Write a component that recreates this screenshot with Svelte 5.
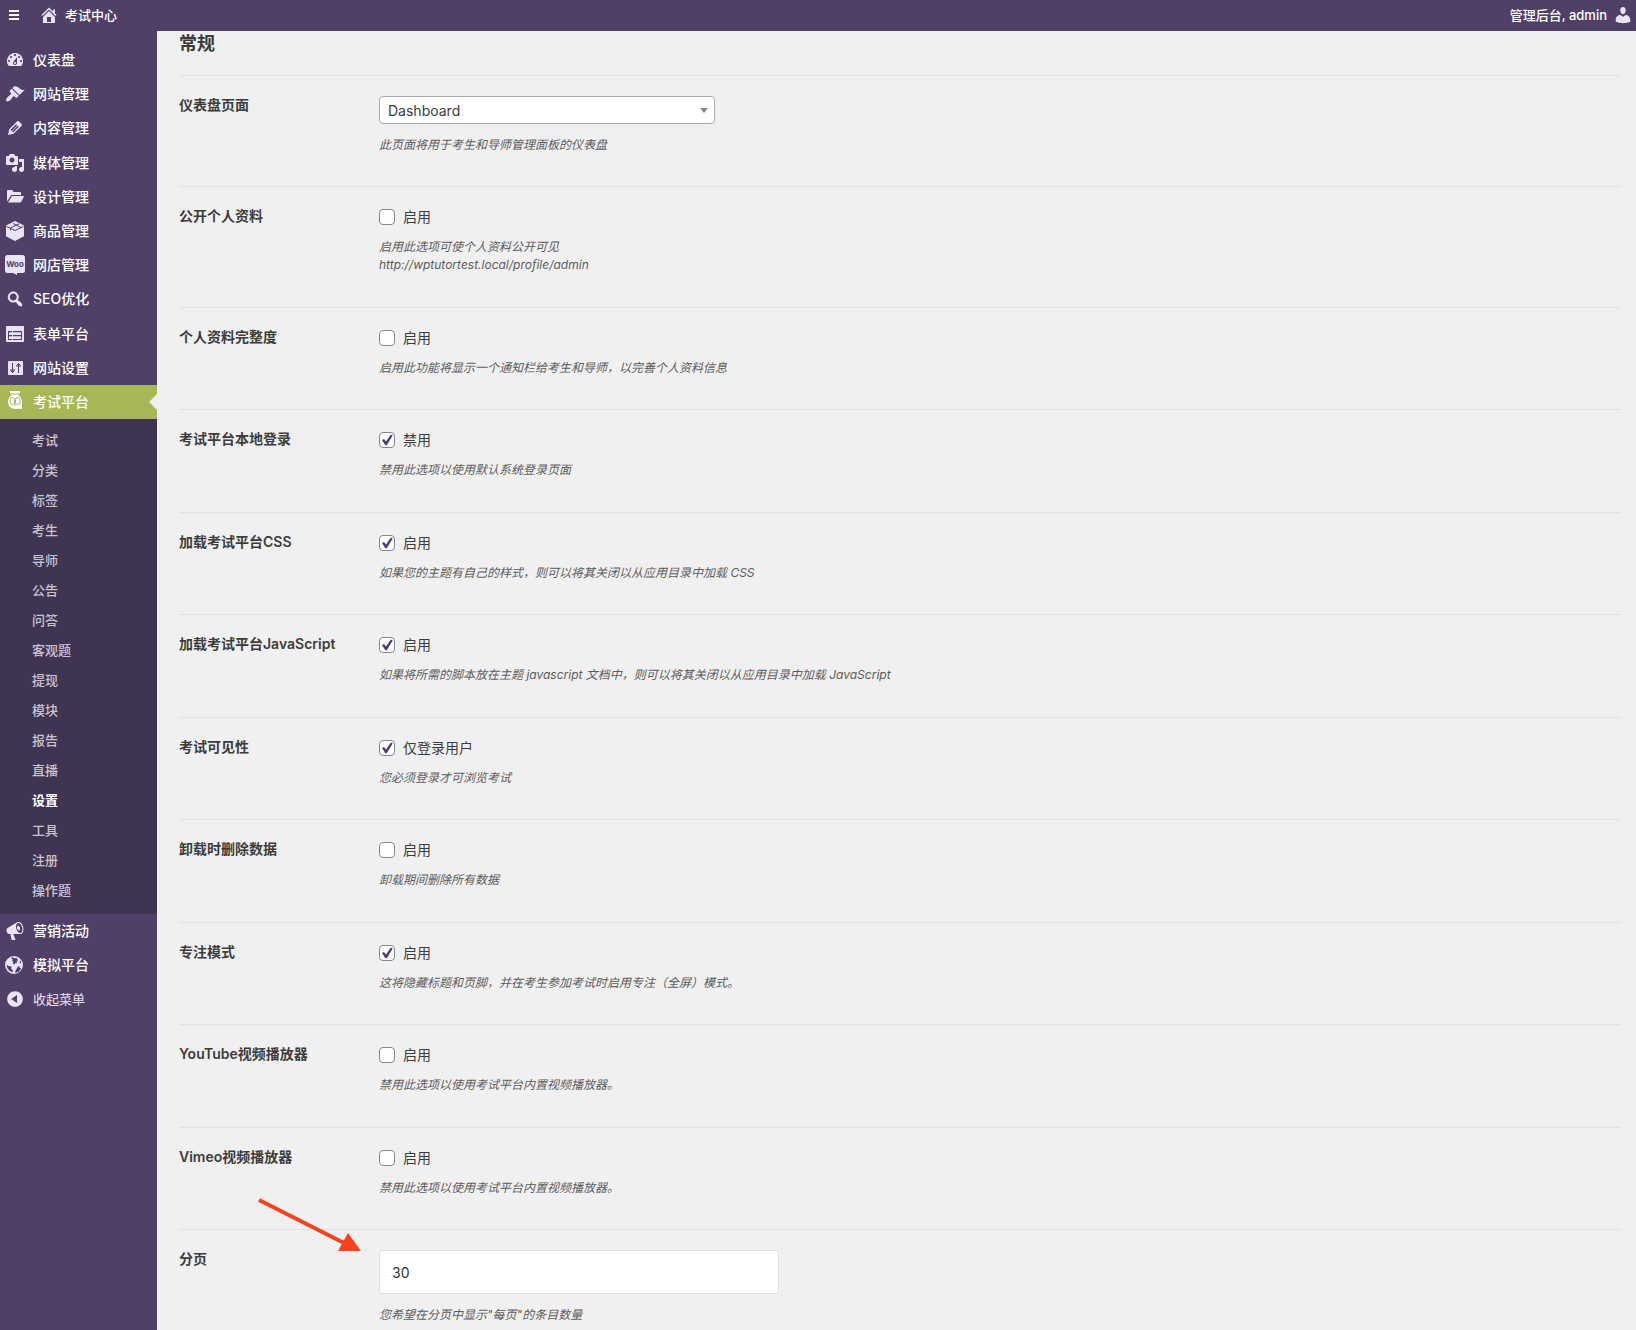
<script>
	let activeMenu = 'exam';
	let page = 'dashboard';
	let perPage = '30';

	const menu = [
		{ id: 'dashboard', label: '仪表盘' },
		{ id: 'site', label: '网站管理' },
		{ id: 'content', label: '内容管理' },
		{ id: 'media', label: '媒体管理', group: true },
		{ id: 'design', label: '设计管理' },
		{ id: 'product', label: '商品管理' },
		{ id: 'woo', label: '网店管理' },
		{ id: 'seo', label: 'SEO优化' },
		{ id: 'form', label: '表单平台', group: true },
		{ id: 'settings', label: '网站设置' },
		{
			id: 'exam',
			label: '考试平台',
			children: [
				'考试', '分类', '标签', '考生', '导师', '公告', '问答', '客观题',
				'提现', '模块', '报告', '直播', '设置', '工具', '注册', '操作题'
			]
		},
		{ id: 'marketing', label: '营销活动' },
		{ id: 'mock', label: '模拟平台' }
	];

	let options = [
		{
			id: 'public_profile',
			title: '公开个人资料',
			text: '启用',
			checked: false,
			desc: ['启用此选项可使个人资料公开可见', 'http://wptutortest.local/profile/admin']
		},
		{
			id: 'profile_completion',
			title: '个人资料完整度',
			text: '启用',
			checked: false,
			desc: ['启用此功能将显示一个通知栏给考生和导师，以完善个人资料信息']
		},
		{
			id: 'native_login',
			title: '考试平台本地登录',
			text: '禁用',
			checked: true,
			desc: ['禁用此选项以使用默认系统登录页面']
		},
		{
			id: 'load_css',
			title: '加载考试平台CSS',
			text: '启用',
			checked: true,
			desc: ['如果您的主题有自己的样式，则可以将其关闭以从应用目录中加载 CSS']
		},
		{
			id: 'load_js',
			title: '加载考试平台JavaScript',
			text: '启用',
			checked: true,
			desc: ['如果将所需的脚本放在主题 javascript 文档中，则可以将其关闭以从应用目录中加载 JavaScript']
		},
		{
			id: 'visibility',
			title: '考试可见性',
			text: '仅登录用户',
			checked: true,
			desc: ['您必须登录才可浏览考试']
		},
		{
			id: 'erase_data',
			title: '卸载时删除数据',
			text: '启用',
			checked: false,
			desc: ['卸载期间删除所有数据']
		},
		{
			id: 'focus_mode',
			title: '专注模式',
			text: '启用',
			checked: true,
			desc: ['这将隐藏标题和页脚，并在考生参加考试时启用专注（全屏）模式。']
		},
		{
			id: 'youtube',
			title: 'YouTube视频播放器',
			text: '启用',
			checked: false,
			desc: ['禁用此选项以使用考试平台内置视频播放器。']
		},
		{
			id: 'vimeo',
			title: 'Vimeo视频播放器',
			text: '启用',
			checked: false,
			desc: ['禁用此选项以使用考试平台内置视频播放器。']
		}
	];

	const icons = {
		home: 'M16 8.5l1.53 1.53-1.06 1.06L10 4.6l-6.47 6.49-1.06-1.06L10 2.5l4 4v-2h2v4zm-6-2.46l6 5.99V18H4v-5.97zM12 17v-5H8v5h4z',
		user: 'M10 9.25c-2.27 0-2.73-3.44-2.73-3.44C7 4.02 7.82 2 9.97 2c2.16 0 2.98 2.02 2.71 3.81 0 0-.41 3.44-2.68 3.44zm0 2.57L12.72 10c2.39 0 4.52 2.33 4.52 4.53v2.49s-3.65 1.13-7.24 1.13c-3.65 0-7.24-1.13-7.24-1.13v-2.49c0-2.25 1.94-4.48 4.47-4.48z',
		dashboard:
			'M3.76 16h12.48A7.998 7.998 0 0 0 10 3a7.998 7.998 0 0 0-6.24 13zM10 4c.55 0 1 .45 1 1s-.45 1-1 1-1-.45-1-1 .45-1 1-1zM6 6c.55 0 1 .45 1 1s-.45 1-1 1-1-.45-1-1 .45-1 1-1zm8 0c.55 0 1 .45 1 1s-.45 1-1 1-1-.45-1-1 .45-1 1-1zm-5.37 5.55L12 7v6c0 1.1-.9 2-2 2s-2-.9-2-2c0-.57.24-1.08.63-1.45zM4 10c.55 0 1 .45 1 1s-.45 1-1 1-1-.45-1-1 .45-1 1-1zm12 0c.55 0 1 .45 1 1s-.45 1-1 1-1-.45-1-1 .45-1 1-1zm-5 3c0-.55-.45-1-1-1s-1 .45-1 1 .45 1 1 1 1-.45 1-1z',
		site: 'M14.48 11.06L7.41 3.99l1.5-1.5c.5-.56 2.3-.47 3.51.32 1.21.8 1.43 1.28 2.91 2.1 1.18.64 2.45 1.26 4.45.85zm-.71.71L6.7 4.7 4.93 6.47c-.39.39-.39 1.02 0 1.41l1.06 1.06c.39.39.39 1.03 0 1.42-.6.6-1.43 1.11-2.21 1.69-.35.26-.7.53-1.01.84C1.43 14.23.4 16.08 1.4 17.07c.99 1 2.84-.03 4.18-1.36.31-.31.58-.66.85-1.02.57-.78 1.08-1.61 1.69-2.21.39-.39 1.02-.39 1.41 0l1.06 1.06c.39.39 1.02.39 1.41 0z',
		content:
			'M13.89 3.39l2.71 2.72c.46.46.42 1.24.03 1.64l-8.01 8.02-5.56 1.16 1.16-5.58s7.6-7.63 7.99-8.03c.39-.39 1.22-.39 1.68.07zm-2.73 2.79l-5.59 5.61 1.11 1.11 5.54-5.65zm-2.97 8.23l5.58-5.6-1.07-1.08-5.59 5.6z',
		media:
			'M13 11V4c0-.55-.45-1-1-1h-1.67L9 1H5L3.67 3H2c-.55 0-1 .45-1 1v7c0 .55.45 1 1 1h10c.55 0 1-.45 1-1zM7 4.5c1.38 0 2.5 1.12 2.5 2.5S8.38 9.5 7 9.5 4.5 8.38 4.5 7 5.62 4.5 7 4.5zM14 6h5v10.5c0 1.38-1.12 2.5-2.5 2.5S14 17.88 14 16.5s1.12-2.5 2.5-2.5c.17 0 .34.02.5.05V9h-3V6zm-4 8.05V13h2v3.5c0 1.38-1.12 2.5-2.5 2.5S7 17.88 7 16.5 8.12 14 9.5 14c.17 0 .34.02.5.05z',
		design:
			'M2 14.5V4.2C2 3.5 2.5 3 3.2 3H7l1.6 2h6.2c.7 0 1.2.5 1.2 1.2V8H7.2c-.7 0-1.2.3-1.6.9zM3 15.5l3.6-5.8c.2-.4.5-.7 1-.7H18.4c.4 0 .6.4.4.8l-2.6 5c-.3.5-.6.7-1.1.7z',
		seo: 'M12.14 4.18c1.87 1.87 2.11 4.75.72 6.89.12.1.22.21.36.31.2.16.47.36.81.59.34.24.56.39.66.47.42.31.73.57.94.78.32.32.6.65.84 1 .25.35.44.69.59 1.04.14.35.21.68.18 1-.02.32-.14.59-.36.81s-.49.34-.81.36c-.31.02-.65-.04-.99-.19-.35-.14-.7-.34-1.04-.59-.35-.24-.68-.52-1-.84-.21-.21-.47-.52-.77-.93-.1-.13-.25-.35-.47-.66-.22-.32-.4-.57-.56-.78-.16-.2-.29-.35-.44-.5-2.07 1.09-4.69.76-6.44-.98-2.14-2.15-2.14-5.64 0-7.78 2.15-2.15 5.63-2.15 7.78 0zm-1.41 6.36c1.36-1.37 1.36-3.58 0-4.95-1.37-1.37-3.59-1.37-4.95 0-1.37 1.37-1.37 3.58 0 4.95 1.36 1.37 3.58 1.37 4.95 0z',
		form: 'M2 2h16c.6 0 1 .4 1 1v14c0 .6-.4 1-1 1H2c-.6 0-1-.4-1-1V3c0-.6.4-1 1-1zM3 7v9h4.200V7zM8 7v9h9V7zM4 8.200V11h3.200V8.200zM8 8.200V11h8V8.200zM4 12.200V15h3.200V12.200zM8 12.200V15h8V12.200z',
		marketing:
			'M18.15 5.94c.46 1.62.38 3.22-.02 4.48-.42 1.28-1.26 2.18-2.3 2.48-.16.06-.26.06-.4.06-.06.02-.12.02-.18.02-.06.02-.14.02-.22.02h-6.8l2.22 5.5c.02.14-.06.26-.14.34-.08.1-.24.16-.34.16H6.95c-.1 0-.26-.06-.34-.16-.08-.08-.16-.2-.14-.34l-1-5.5H4.25l-.02-.02c-.5.06-1.08-.18-1.54-.62s-.88-1.08-1.06-1.88c-.24-.8-.2-1.56-.02-2.2.18-.62.58-1.08 1.06-1.3l.02-.02 9-5.4c.1-.06.18-.1.24-.16.06-.04.14-.08.24-.12.16-.08.28-.12.5-.18 1.04-.3 2.24.1 3.22.98s1.84 2.24 2.26 3.86zm-2.58 5.98h-.02c.4-.1.74-.34 1.04-.7.58-.7.86-1.76.86-3.04 0-.64-.1-1.3-.28-1.98-.34-1.36-1.02-2.5-1.78-3.24s-1.68-1.1-2.46-.88c-.82.22-1.4.96-1.7 2-.32 1.04-.28 2.36.06 3.72.38 1.36 1 2.5 1.8 3.24.78.74 1.62 1.1 2.48.88zm-2.54-7.08c.22-.04.42-.02.62.04.38.16.76.48 1.02 1s.42 1.2.42 1.78c0 .3-.04.56-.12.8-.18.48-.44.84-.86.94-.34.1-.8-.06-1.14-.4s-.64-.86-.78-1.5c-.18-.62-.12-1.24.02-1.72s.48-.84.82-.94z',
		mock: 'M9 1a9 9 0 1 1 0 18A9 9 0 0 1 9 1zM1.600 9.200c0 3.300 1.600 6 4.500 7.500l1.600.4.2-1.600-1.600-1.500.2-2.300-1.300-.4-2.200-.4zM7.500 2.200L6 3.500l1.800.8-.5 1.500 1.200 1.400-.8 1.800 2 .3.8-1.300L12.200 8l-.6-1.800 1.400-1-1.200-2.300-2 .3zM11.800 13.500l-1.300 2.200-.3 2c1.800-.1 3.300-.8 4.500-2l1.500-2.500-1.300-.2-.7-1.700-1.400.2zM15.300 5.500l-1 1.300 1.200 1.500 1 .2z',
		collapse:
			'M10 2.16c4.33 0 7.84 3.51 7.84 7.84s-3.51 7.84-7.84 7.84S2.16 14.33 2.16 10 5.71 2.16 10 2.16zm2 11.72V6.12L6.18 9.97z'
	};
</script>

<header class="topbar">
	<button class="toggle" type="button" aria-label="菜单">
		<svg viewBox="0 0 10 10"><path d="M0 0h10v2H0zM0 4h10v2H0zM0 8h10v2H0z" /></svg>
	</button>
	<a class="site-name" href="#home">
		<svg class="icon" viewBox="0 0 20 20"><path fill-rule="evenodd" d={icons.home} /></svg>
		考试中心
	</a>
	<a class="account" href="#account">
		管理后台, admin
		<svg class="icon" viewBox="0 0 20 20"><path d={icons.user} /></svg>
	</a>
</header>

<div class="layout">
	<nav class="sidebar">
		<ul class="menu">
			{#each menu as item}
				<li class:group={item.group}>
					<a class="menu-link" class:active={item.id === activeMenu} href="#{item.id}">
						<svg class="icon" viewBox="0 0 20 20">
							{#if item.id === 'product'}
								<path d="M10 0l9 4.500v10.700L10 20l-9-4.800V4.500z" />
								<path class="line" d="M1.500 5.500L10 9.500l8.500-4M5.500 7.300v2M5.500 7L14 2.800M8 2.500l8 4" />
							{:else if item.id === 'woo'}
								<path d="M2.500 0h15A2.500 2.500 0 0 1 20 2.500v13a2.500 2.500 0 0 1-2.500 2.500H12v2l-4-2H2.500A2.500 2.500 0 0 1 0 15.500v-13A2.500 2.500 0 0 1 2.500 0z" />
								<text class="woo" x="10" y="12" text-anchor="middle">Woo</text>
							{:else if item.id === 'settings'}
								<rect x="3" y="3" width="15" height="14" rx="1" />
								<path class="line" d="M7.500 5v9M5 12h5M5.500 12.500l2 2 2-2M13.500 15V6M11 8h5M11.500 7.500l2-2 2 2" />
							{:else if item.id === 'exam'}
								<path d="M4.500-1h11l-1 3-1 .5v1c2.300 1.500 3.500 3.700 3.500 6.500v7l-3-.3c-1.200.5-2.600.5-4 .3-4-.4-7-3-7-7 0-2.800 1.200-5 3.500-6.500v-1L5.500 2z" />
								<g class="cut">
									<path d="M6 1.500q4 1.500 8 0" />
									<rect x="5" y="5.500" width="4.500" height="7" rx="2.200" />
									<rect x="10.500" y="5.500" width="4.500" height="7" rx="2.200" />
									<path d="M10 11v3" />
								</g>
							{:else}
								<path fill-rule="evenodd" d={icons[item.id]} />
							{/if}
						</svg>
						{item.label}
					</a>
					{#if item.children && item.id === activeMenu}
						<ul class="submenu">
							{#each item.children as child}
								<li><a href="#exam" class:current={child === '设置'}>{child}</a></li>
							{/each}
						</ul>
					{/if}
				</li>
			{/each}
			<li>
				<button class="menu-link collapse" type="button">
					<svg class="icon" viewBox="0 0 20 20"><path fill-rule="evenodd" d={icons.collapse} /></svg>
					收起菜单
				</button>
			</li>
		</ul>
	</nav>

	<main>
		<h2>常规</h2>
		<form on:submit|preventDefault>
			<div class="row">
				<label class="title" for="dashboard_page">仪表盘页面</label>
				<div class="field">
					<div class="select-wrap">
						<select id="dashboard_page" bind:value={page}>
							<option value="dashboard">Dashboard</option>
						</select>
					</div>
					<p class="desc">此页面将用于考生和导师管理面板的仪表盘</p>
				</div>
			</div>

			{#each options as option}
				<div class="row" role="group" aria-labelledby="{option.id}_title">
					<span class="title" id="{option.id}_title">{option.title}</span>
					<div class="field">
						<label class="check">
							<input type="checkbox" bind:checked={option.checked} />
							{option.text}
						</label>
						<div class="desc">
							{#each option.desc as line}
								<p>{line}</p>
							{/each}
						</div>
					</div>
				</div>
			{/each}

			<div class="row">
				<label class="title" for="per_page">分页</label>
				<div class="field">
					<input id="per_page" class="text" type="text" bind:value={perPage} />
					<p class="desc">您希望在分页中显示"每页"的条目数量</p>
				</div>
				<svg class="arrow" viewBox="0 0 104 56" aria-hidden="true">
					<path d="M1 4L86 47" stroke="#f5431f" stroke-width="4" />
					<path d="M90 37L103 55H80z" fill="#f5431f" />
				</svg>
			</div>
		</form>
	</main>
</div>

<style>
	:global(body) {
		background: #f0f0f0;
		color: #3c3c3c;
		font-family: Inter, 'Noto Sans CJK SC', sans-serif;
		font-size: 14px;
		line-height: 20px;
	}
	:global(#app) {
		display: flex;
		flex-direction: column;
		min-height: 100vh;
	}
	ul {
		list-style: none;
		margin: 0;
		padding: 0;
	}
	p {
		margin: 0;
	}
	a {
		color: inherit;
		text-decoration: none;
	}
	button {
		border: none;
		background: none;
		color: inherit;
		font: inherit;
		cursor: pointer;
	}
	.icon {
		flex: none;
		width: 20px;
		height: 20px;
		fill: #e9e3f6;
		overflow: visible;
	}
	.topbar {
		display: flex;
		align-items: center;
		box-sizing: border-box;
		height: 31px;
		padding-bottom: 1px;
		background: #504068;
		color: #fff;
		font-size: 13px;
		font-weight: 500;
	}
	.toggle {
		display: flex;
		padding: 0 20px 0 9px;
	}
	.toggle svg {
		width: 10px;
		height: 10px;
		fill: #fff;
	}
	.site-name,
	.account {
		display: flex;
		align-items: center;
		gap: 6px;
	}
	.account {
		margin-left: auto;
		padding-right: 3px;
	}
	.layout {
		display: flex;
		flex: 1;
	}
	.sidebar {
		flex: none;
		width: 157px;
		background: #504068;
		color: #fff;
	}
	.menu {
		padding-top: 12px;
	}
	.group {
		margin-top: 1px;
	}
	.menu-link {
		display: flex;
		align-items: center;
		gap: 8px;
		box-sizing: border-box;
		width: 100%;
		height: 34px;
		padding: 0 0 0 5px;
		font-weight: 500;
	}
	.menu-link.active {
		position: relative;
		background: #a7b656;
	}
	.menu-link.active::after {
		content: '';
		position: absolute;
		right: 0;
		top: 9px;
		border: 8px solid transparent;
		border-left: none;
		border-right-color: #f0f0f0;
	}
	.active .icon {
		fill: #fff;
	}
	.collapse {
		font-size: 13px;
		font-weight: 400;
		color: #e9e3f6;
	}
	.woo {
		fill: #504068;
		font: 700 8px Inter, sans-serif;
	}
	.line,
	.cut {
		fill: none;
		stroke: #504068;
		stroke-width: 1;
	}
	.cut {
		stroke: #a7b656;
	}
	.submenu {
		padding: 6px 0 9px;
		background: #403453;
		color: #c9c4d1;
		font-size: 13px;
		font-weight: 500;
	}
	.submenu a {
		display: block;
		padding-left: 32px;
		line-height: 30px;
	}
	.submenu .current {
		color: #fff;
		font-weight: 600;
	}
	main {
		flex: 1;
		padding: 0 15px 0 22px;
	}
	h2 {
		margin: 0;
		padding-bottom: 18px;
		font-size: 18px;
		line-height: 26px;
		font-weight: 600;
	}
	.row {
		position: relative;
		display: flex;
		padding: 20px 0 32px;
		border-top: 1px solid #e2e2e2;
	}
	.row:nth-child(even) {
		padding-bottom: 33px;
	}
	.row:last-child {
		padding-bottom: 0;
	}
	.title {
		flex: none;
		width: 200px;
		font-weight: 600;
		line-height: 18px;
	}
	.field {
		flex: 1;
	}
	.select-wrap {
		position: relative;
		width: 336px;
	}
	.select-wrap::after {
		content: '';
		position: absolute;
		right: 7px;
		top: 12px;
		border: 4px solid transparent;
		border-top: 5px solid #888;
		border-bottom: none;
		pointer-events: none;
	}
	select {
		display: block;
		appearance: none;
		width: 100%;
		height: 28px;
		padding: 1px 24px 0 8px;
		border: 1px solid #aaa;
		border-radius: 4px;
		background: #fff;
		color: #3c3c3c;
		font: inherit;
	}
	.text {
		display: block;
		box-sizing: border-box;
		width: 400px;
		height: 44px;
		padding: 0 12px;
		border: 1px solid #ddd;
		border-radius: 3px;
		background: #fff;
		color: #333;
		font: inherit;
	}
	.check {
		display: flex;
		align-items: center;
		gap: 8px;
		width: max-content;
	}
	.check input {
		appearance: none;
		display: grid;
		place-items: center;
		box-sizing: border-box;
		width: 16px;
		height: 16px;
		margin: 0;
		border: 1px solid #7e8993;
		border-radius: 4px;
		background: #fff;
	}
	.check input:checked::before {
		content: '';
		width: 12px;
		height: 12px;
		background: #4f3d70;
		clip-path: polygon(8% 50%, 25% 42%, 42% 62%, 82% 4%, 98% 12%, 48% 94%, 36% 94%);
	}
	.desc {
		margin-top: 12px;
		color: #5c5c5c;
		font-size: 12px;
		font-style: italic;
		line-height: 18px;
	}
	.check + .desc {
		margin-top: 11px;
	}
	.arrow {
		position: absolute;
		left: 79px;
		top: -34px;
		width: 104px;
		height: 56px;
	}
</style>
